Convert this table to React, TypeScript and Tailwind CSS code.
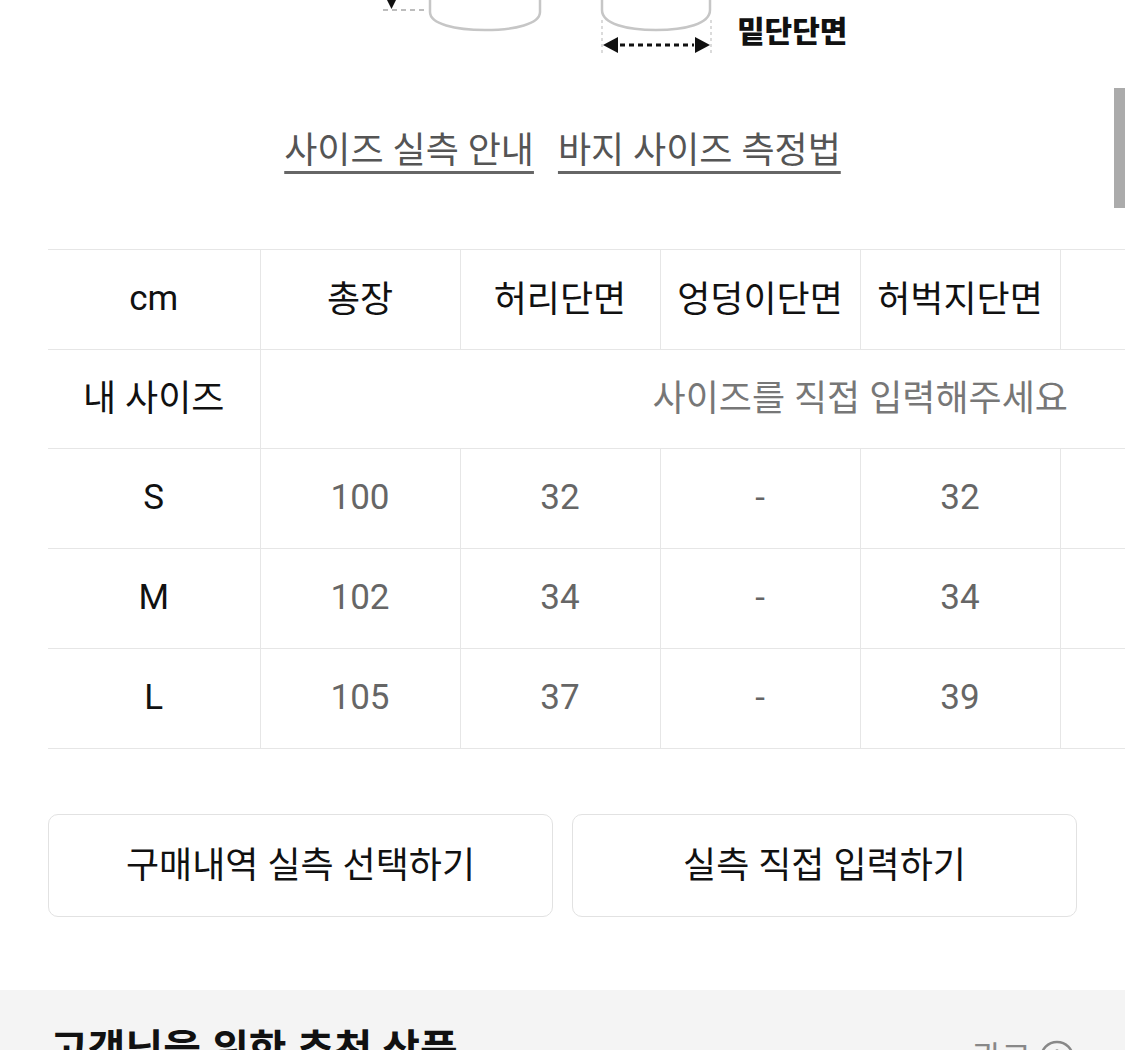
import React from "react";

const cols = ["총장", "허리단면", "엉덩이단면", "허벅지단면", "밑위", "밑위"];

const rows = [
  { size: "S", values: ["100", "32", "-", "32", "23.5", "30"] },
  { size: "M", values: ["102", "34", "-", "34", "24", "31"] },
  { size: "L", values: ["105", "37", "-", "39", "25", "32"] },
];

function Illustration() {
  return (
    <div className="flex h-[60px] items-start pl-[370px]">
      <svg width="360" height="60" viewBox="0 0 360 60" fill="none">
        <polygon points="16,-2 27,-2 21.5,9" fill="#111" />
        <line x1="13" y1="10" x2="58" y2="10" stroke="#bdbdbd" strokeWidth="2" strokeDasharray="5 4" />
        <path d="M60 0 V12 C60 24 85 30 115 30 C145 30 170 24 170 12 V0" stroke="#c6c6c6" strokeWidth="2.5" />
        <path d="M232 0 V10 C232 24 257 30 286 30 C315 30 340 24 340 10 V0" stroke="#c6c6c6" strokeWidth="2.5" />
        <line x1="232" y1="20" x2="232" y2="54" stroke="#cfcfcf" strokeWidth="1.5" strokeDasharray="3 3" />
        <line x1="341" y1="20" x2="341" y2="54" stroke="#cfcfcf" strokeWidth="1.5" strokeDasharray="3 3" />
        <polygon points="233,45 248,37 248,53" fill="#111" />
        <polygon points="340,45 325,37 325,53" fill="#111" />
        <line x1="250" y1="45" x2="324" y2="45" stroke="#111" strokeWidth="3" strokeDasharray="5 4" />
      </svg>
      <span className="ml-[7px] mt-[15px] text-[30px] font-black leading-[34px] text-[#111]">밑단단면</span>
    </div>
  );
}

export default function App() {
  const font = "font-[Roboto,'Noto_Sans_CJK_KR',sans-serif]";
  return (
    <div className={`relative min-h-[1050px] w-[1125px] overflow-hidden bg-white ${font}`}>
      <Illustration />

      <div className="mt-[68px] flex justify-center gap-[24px] text-[36px] leading-[46px] text-[#555]">
        <span className="underline decoration-[#666] decoration-[3px] underline-offset-[8px]">사이즈 실측 안내</span>
        <span className="underline decoration-[#666] decoration-[3px] underline-offset-[8px]">바지 사이즈 측정법</span>
      </div>

      <div className="mt-[75px] overflow-hidden pl-[48px]">
        <table className="w-[1412px] table-fixed border-collapse">
          <colgroup>
            <col className="w-[212px]" />
            {cols.map((c, i) => (
              <col key={i} className="w-[200px]" />
            ))}
          </colgroup>
          <tbody>
            <tr className="h-[100px] border-y border-[#e6e6e6]">
              <td className="text-center text-[35px] text-[#111]">cm</td>
              {cols.map((c, i) => (
                <td key={i} className="border-l border-[#e6e6e6] text-center text-[36px] text-[#111]">
                  {c}
                </td>
              ))}
            </tr>
            <tr className="h-[99px] border-b border-[#e6e6e6]">
              <td className="text-center text-[36px] text-[#111]">내 사이즈</td>
              <td colSpan={6} className="border-l border-[#e6e6e6] text-center text-[36px] text-[#777]">
                사이즈를 직접 입력해주세요
              </td>
            </tr>
            {rows.map((r) => (
              <tr key={r.size} className="h-[100px] border-b border-[#e6e6e6]">
                <td className="text-center text-[35px] text-[#111]">{r.size}</td>
                {r.values.map((v, i) => (
                  <td key={i} className="border-l border-[#e6e6e6] text-center text-[35px] text-[#666]">
                    {v}
                  </td>
                ))}
              </tr>
            ))}
          </tbody>
        </table>
      </div>

      <div className="mt-[65px] flex gap-[19px] px-[48px]">
        <button className="flex h-[103px] flex-1 items-center justify-center rounded-[10px] border border-[#e2e2e2] bg-white text-[36px] text-[#111]">
          구매내역 실측 선택하기
        </button>
        <button className="flex h-[103px] flex-1 items-center justify-center rounded-[10px] border border-[#e2e2e2] bg-white text-[36px] text-[#111]">
          실측 직접 입력하기
        </button>
      </div>

      <div className="mt-[73px] h-[200px] bg-[#f4f4f4] px-[50px] pt-[34px]">
        <div className="flex items-start justify-between">
          <h2 className="text-[41px] font-bold leading-[52px] text-[#111]">고객님을 위한 추천 상품</h2>
          <div className="mt-[14px] flex items-center gap-[8px] text-[32px] leading-[40px] text-[#888]">
            <span>광고</span>
            <svg width="36" height="36" viewBox="0 0 36 36" fill="none">
              <circle cx="18" cy="18" r="16" stroke="#888" strokeWidth="2.5" />
              <line x1="18" y1="16" x2="18" y2="26" stroke="#888" strokeWidth="2.5" />
              <circle cx="18" cy="11" r="1.8" fill="#888" />
            </svg>
          </div>
        </div>
      </div>

      <div className="absolute right-0 top-[88px] h-[120px] w-[11px] bg-[#ababab]" />
    </div>
  );
}
